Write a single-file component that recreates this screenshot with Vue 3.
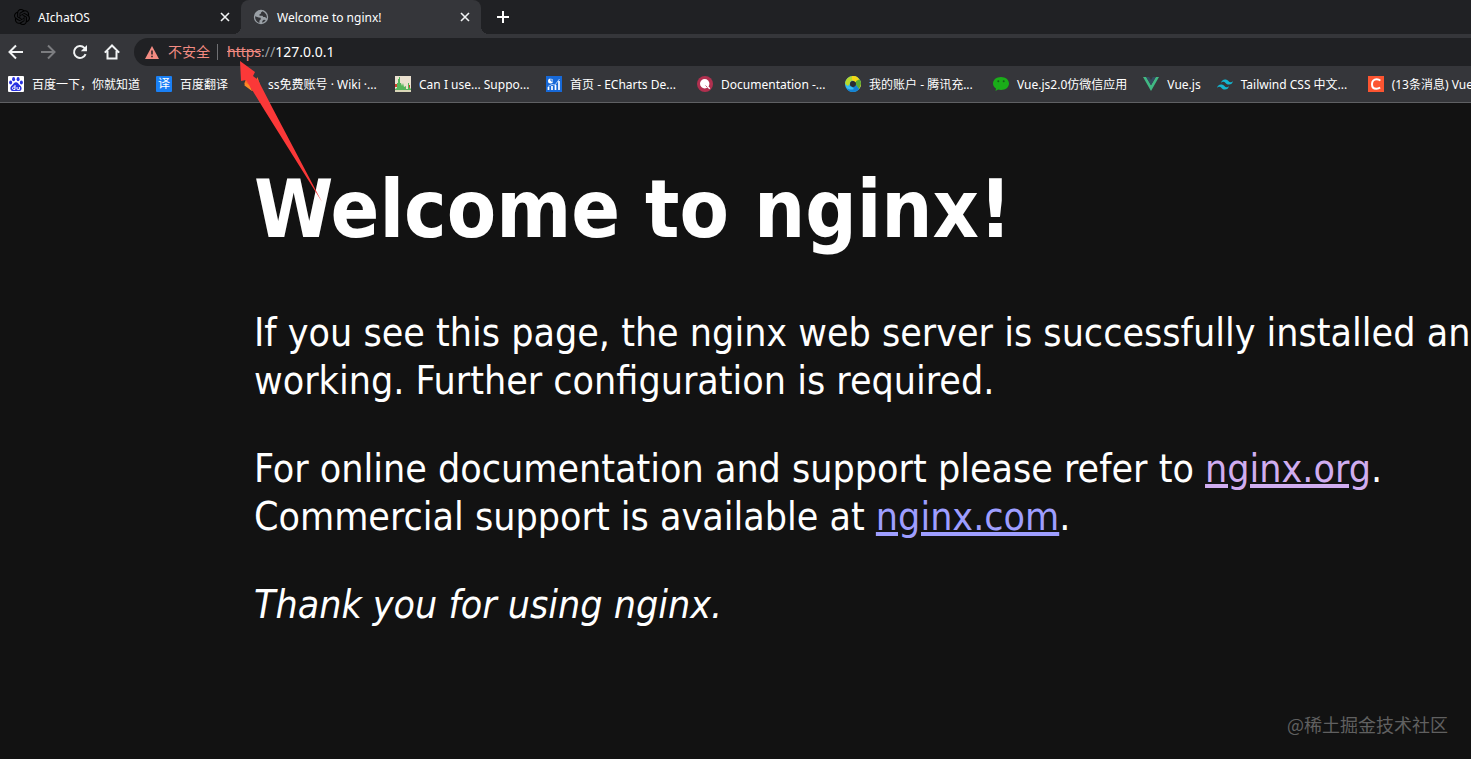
<script setup>
const tabs = [
  { id: 'chat', title: 'AIchatOS', active: false },
  { id: 'nginx', title: 'Welcome to nginx!', active: true },
]

const bookmarks = [
  { icon: 'baidu', label: '百度一下，你就知道' },
  { icon: 'translate', label: '百度翻译' },
  { icon: 'gitlab', label: 'ss免费账号 · Wiki ·...', size: 'wide' },
  { icon: 'caniuse', label: 'Can I use... Suppo...', size: 'wide' },
  { icon: 'echarts', label: '首页 - ECharts De...', size: 'wide' },
  { icon: 'docs', label: 'Documentation -...', size: 'medium' },
  { icon: 'tencent', label: '我的账户 - 腾讯充...', size: 'medium' },
  { icon: 'wechat', label: 'Vue.js2.0仿微信应用' },
  { icon: 'vue', label: 'Vue.js' },
  { icon: 'tailwind', label: 'Tailwind CSS 中文...', size: 'wide' },
  { icon: 'csdn', label: '(13条消息) Vue', size: 'wide' },
]
</script>

<template>
  <div class="browser">
    <header class="chrome">
      <div class="tab-strip">
        <div v-for="tab in tabs" :key="tab.id" class="tab" :class="{ active: tab.active }">
          <svg v-if="tab.id === 'chat'" class="favicon" viewBox="0 0 24 24" aria-hidden="true">
            <path fill="#000" d="M22.2819 9.8211a5.9847 5.9847 0 0 0-.5157-4.9108 6.0462 6.0462 0 0 0-6.5098-2.9A6.0651 6.0651 0 0 0 4.9807 4.1818a5.9847 5.9847 0 0 0-3.9977 2.9 6.0462 6.0462 0 0 0 .7427 7.0966 5.98 5.98 0 0 0 .511 4.9107 6.051 6.051 0 0 0 6.5146 2.9001A5.9847 5.9847 0 0 0 13.2599 24a6.0557 6.0557 0 0 0 5.7718-4.2058 5.9894 5.9894 0 0 0 3.9977-2.9001 6.0557 6.0557 0 0 0-.7475-7.0729zm-9.022 12.6081a4.4755 4.4755 0 0 1-2.8764-1.0408l.1419-.0804 4.7783-2.7582a.7948.7948 0 0 0 .3927-.6813v-6.7369l2.02 1.1686a.071.071 0 0 1 .038.052v5.5826a4.504 4.504 0 0 1-4.4945 4.4944zm-9.6607-4.1254a4.4708 4.4708 0 0 1-.5346-3.0137l.142.0852 4.783 2.7582a.7712.7712 0 0 0 .7806 0l5.8428-3.3685v2.3324a.0804.0804 0 0 1-.0332.0615L9.74 19.9502a4.4992 4.4992 0 0 1-6.1408-1.6464zM2.3408 7.8956a4.485 4.485 0 0 1 2.3655-1.9728V11.6a.7664.7664 0 0 0 .3879.6765l5.8144 3.3543-2.0201 1.1685a.0757.0757 0 0 1-.071 0l-4.8303-2.7865A4.504 4.504 0 0 1 2.3408 7.872zm16.5963 3.8558L13.1038 8.364 15.1192 7.2a.0757.0757 0 0 1 .071 0l4.8303 2.7913a4.4944 4.4944 0 0 1-.6765 8.1042v-5.6772a.79.79 0 0 0-.407-.667zm2.0107-3.0231l-.142-.0852-4.7735-2.7818a.7759.7759 0 0 0-.7854 0L9.409 9.2297V6.8974a.0662.0662 0 0 1 .0284-.0615l4.8303-2.7866a4.4992 4.4992 0 0 1 6.6802 4.66zM8.3065 12.863l-2.02-1.1638a.0804.0804 0 0 1-.038-.0567V6.0742a4.4992 4.4992 0 0 1 7.3757-3.4537l-.142.0805L8.704 5.459a.7948.7948 0 0 0-.3927.6813zm1.0976-2.3654l2.602-1.4998 2.6069 1.4998v2.9994l-2.5974 1.4997-2.6067-1.4997Z" />
          </svg>
          <svg v-else class="favicon" viewBox="0 0 16 16" aria-hidden="true">
            <circle cx="8" cy="8" r="7.2" fill="#9aa0a6" />
            <path fill="#35363a" d="M9.500 2.300 8 3.400v1.200L6.500 5.300v1.400h3l.8 1.200H12l1.800 1.600c.4-2.600-.5-5.400-4.300-7.200zM2.100 7.300l3.600 1.200 2 .2v1.700l-1.300 1.300v2.200C3.700 13 1.800 10.600 2.100 7.300zM9.300 13.800v-1.700l1.500-1.300 1.900.3c-.8 1.400-2 2.300-3.400 2.700z" />
          </svg>
          <span class="tab-title">{{ tab.title }}</span>
          <button class="tab-close" type="button" :aria-label="`Close ${tab.title}`">
            <svg width="10" height="10" viewBox="0 0 10 10"><path d="M1 1l8 8M9 1 1 9" fill="none" stroke="#f1f3f4" stroke-width="1.6" /></svg>
          </button>
        </div>
        <button class="new-tab" type="button" aria-label="New tab">
          <svg width="12" height="12" viewBox="0 0 12 12"><path d="M6 0v12M0 6h12" fill="none" stroke="#fff" stroke-width="2" /></svg>
        </button>
      </div>

      <div class="toolbar">
        <button class="nav" type="button" aria-label="Back">
          <svg viewBox="0 0 16 16"><path d="M15 8H2M8 1.500 1.500 8 8 14.500" fill="none" stroke="#f1f3f4" stroke-width="2" /></svg>
        </button>
        <button class="nav" type="button" aria-label="Forward" disabled>
          <svg viewBox="0 0 16 16"><path d="M1 8h13M8 1.500 14.500 8 8 14.500" fill="none" stroke="#7c7d80" stroke-width="2" /></svg>
        </button>
        <button class="nav" type="button" aria-label="Reload">
          <svg viewBox="0 0 16 16"><path d="M13.600 10.200A6 6 0 1 1 12.400 3.900L13.800 5.300" fill="none" stroke="#f1f3f4" stroke-width="2" /><path d="M15 1v6.200H8.800z" fill="#f1f3f4" /></svg>
        </button>
        <button class="nav" type="button" aria-label="Home">
          <svg viewBox="0 0 16 16"><path d="M.8 8.600 8 1.500l7.200 7.100M3.500 7v7.500h9V7" fill="none" stroke="#f1f3f4" stroke-width="2" /></svg>
        </button>
        <div class="omnibox">
          <svg class="warning" viewBox="0 0 14 13" aria-hidden="true">
            <path d="M7 0l7 13H0z" fill="#f28b82" />
            <path d="M7 4.500v4M7 9.700v1.600" stroke="#202124" stroke-width="1.5" />
          </svg>
          <span class="insecure">不安全</span>
          <span class="divider"></span>
          <span class="url"><s class="scheme">https</s><span class="slashes">://</span>127.0.0.1</span>
        </div>
      </div>

      <nav class="bookmarks" aria-label="Bookmarks">
        <a v-for="mark in bookmarks" :key="mark.icon" href="#" class="bookmark" :class="mark.size">
          <svg v-if="mark.icon === 'baidu'" viewBox="0 0 16 16">
            <rect width="16" height="16" rx="1" fill="#fff" />
            <g fill="#2932e1">
              <ellipse cx="5.6" cy="3.2" rx="1.5" ry="2.1" />
              <ellipse cx="10.1" cy="3.2" rx="1.5" ry="2.1" />
              <ellipse cx="2.6" cy="6.6" rx="1.5" ry="2" />
              <ellipse cx="13.4" cy="6.6" rx="1.5" ry="2" />
              <path d="M8 6.200c1.800 0 2.500 1.900 3.900 3.100 1.700 1.500 2.100 3 1.400 4.400-1 2-3.300 1.200-5.300 1.200s-4.300.8-5.300-1.200c-.7-1.400-.3-2.900 1.400-4.400C5.500 8.100 6.200 6.200 8 6.200z" />
            </g>
            <path d="M7 9v4.500H5.500c-1.300 0-1.300-2.500 0-2.500H7M9 11v2c0 .4.3.6.700.6h1.700V11" fill="none" stroke="#fff" />
          </svg>
          <svg v-else-if="mark.icon === 'translate'" viewBox="0 0 16 16">
            <rect width="16" height="16" rx="1" fill="#1a80f5" />
            <text x="8" y="12" text-anchor="middle" class="glyph-cjk">译</text>
          </svg>
          <svg v-else-if="mark.icon === 'gitlab'" viewBox="0 0 16 16">
            <path d="M2.500 1 .5 7.500 8 15 5.300 7z" fill="#fc6d26" />
            <path d="m13.500 1 2 6.500L8 15l2.700-8z" fill="#fc6d26" />
            <path d="M5.300 7h5.400L8 15z" fill="#e24329" />
            <path d="M.8 6.500 5.300 9 8 15 .5 9.500zM15.200 6.500 10.700 9 8 15l7.500-5.500z" fill="#fc8a26" />
          </svg>
          <svg v-else-if="mark.icon === 'caniuse'" viewBox="0 0 16 16">
            <rect width="16" height="16" fill="#ebe1d0" />
            <path d="M0 8h2v3H0zM8 11h3v2H8zM13 9h2v3h-2z" fill="#d4402f" />
            <path d="M0 13l2-1V7h1V3h1V1h1v6h1l1 3 1-3 1 4 2-1v3h2V7h1v4l2 2v1H0z" fill="#55b55b" />
            <path d="M0 14h16v2H0z" fill="#d9d7b8" />
          </svg>
          <svg v-else-if="mark.icon === 'echarts'" viewBox="0 0 16 16">
            <rect width="16" height="16" fill="#1769d8" />
            <circle cx="4.5" cy="5" r="2.5" fill="#fff" />
            <path d="M5 2v3h3" fill="none" stroke="#1769d8" />
            <path d="M2.500 14v-3M6 14v-4M9.500 14V9M13 14V5" stroke="#fff" stroke-width="1.7" />
            <path d="M2 10.500l4-2 3 .5 4.500-6" fill="none" stroke="#d5e6ff" stroke-width=".8" />
          </svg>
          <svg v-else-if="mark.icon === 'docs'" viewBox="0 0 16 16">
            <circle cx="8" cy="8" r="8" fill="#b0304f" />
            <circle cx="7.7" cy="7.7" r="4.7" fill="#fff" />
            <path d="m8.500 9.500 3 3" stroke="#b0304f" stroke-width=".8" />
            <path d="m10.500 10.500 2.300 2.300" stroke="#fff" stroke-width="1.5" />
          </svg>
          <svg v-else-if="mark.icon === 'tencent'" viewBox="0 0 16 16">
            <circle cx="8" cy="8" r="5.5" fill="none" stroke="#2fb5ed" stroke-width="5" />
            <path d="M0 7a8 8 0 0 1 8-7c2 0 4 .8 5.300 2L10 5.200C7 3.500 5 5 4.800 8L3 10C1.500 9.500.3 8.500 0 7z" fill="#b8d92b" />
            <path d="M7 0c5-.5 9 3.500 9 8 0 2-1 4-2 5-.2-3-1-5-3.300-6.800L7 4z" fill="#f5d715" />
            <path d="M11 5 14.500 3.200C15.500 4.700 16 6 16 8l-2 5-3.200-4z" fill="#5cab32" />
            <path d="M2 13.200 5 10c2 2 4.800 1.500 6-1l3 4c-3.500 4-9 3.800-12 .2z" fill="#1482d4" />
            <path d="M0 7c1 3 4 4 6.500 3.500L9 13c-4 1.500-8 0-9-6z" fill="#35bdf2" />
            <circle cx="8" cy="8" r="2.8" fill="#292d32" />
          </svg>
          <svg v-else-if="mark.icon === 'wechat'" viewBox="0 0 16 16">
            <path d="M8 1c4.500 0 8 2.800 8 6.500S12.500 14 8 14c-1 0-2-.1-2.900-.4L2.500 15l.5-2.500C1.100 11.300 0 9.500 0 7.500 0 3.800 3.500 1 8 1z" fill="#1aad19" />
            <circle cx="5.3" cy="5.3" r="1" fill="#145f17" />
            <circle cx="10.7" cy="5.3" r="1" fill="#145f17" />
          </svg>
          <svg v-else-if="mark.icon === 'vue'" viewBox="0 0 16 16">
            <path d="M0 1h3.200L8 9.300 12.800 1H16L8 15z" fill="#41b883" />
            <path d="M3.200 1h3L8 4.100 9.800 1h3L8 9.300z" fill="#35495e" />
          </svg>
          <svg v-else-if="mark.icon === 'tailwind'" viewBox="0 0 16 16">
            <path d="M4 7c.5-2.400 1.900-3.600 4-3.600 3.200 0 3.600 2.400 5.200 2.800 1 .3 2-.1 2.800-1.200-.5 2.400-1.900 3.600-4 3.600-3.200 0-3.600-2.400-5.200-2.800C5.700 5.500 4.800 5.900 4 7zM0 12c.5-2.400 1.900-3.600 4-3.600 3.200 0 3.600 2.400 5.200 2.800 1 .3 2-.1 2.800-1.200-.5 2.400-1.900 3.600-4 3.600-3.200 0-3.600-2.400-5.200-2.800C1.700 10.500.8 10.900 0 12z" fill="#13b5d0" />
          </svg>
          <svg v-else viewBox="0 0 16 16">
            <rect width="16" height="16" fill="#fc5531" />
            <path d="M12.300 4.700C11.400 3.700 10.200 3.300 8.600 3.300 5.800 3.300 4 5.400 4 8.200c0 2.700 1.600 4.500 4.300 4.500 1.500 0 2.800-.4 3.800-1.200" fill="none" stroke="#fff" stroke-width="2" />
          </svg>
          <span>{{ mark.label }}</span>
        </a>
      </nav>
    </header>

    <main class="page">
      <article class="content">
        <h1>Welcome to nginx!</h1>
        <p>If you see this page, the nginx web server is successfully installed and<br />working. Further configuration is required.</p>
        <p>For online documentation and support please refer to <a class="visited" href="#">nginx.org</a>.<br />Commercial support is available at <a href="#">nginx.com</a>.</p>
        <p><em>Thank you for using nginx.</em></p>
      </article>
      <div class="watermark">@稀土掘金技术社区</div>
    </main>

    <svg class="pointer" width="84" height="142" viewBox="0 0 84 142" aria-hidden="true">
      <path d="M0 0 15 11 13 15 18 19 33 48 82 141 25 50 6 19 1 20z" fill="#fb3838" />
    </svg>
  </div>
</template>

<style>
body {
  margin: 0;
  background: #121212;
}
</style>

<style scoped>
.browser {
  position: relative;
  display: flex;
  flex-direction: column;
  min-height: 100vh;
  overflow: hidden;
  background: #121212;
  color: #fff;
  font-family: "Noto Sans", "Noto Sans CJK SC", sans-serif;
}

button {
  display: flex;
  align-items: center;
  justify-content: center;
  padding: 0;
  border: 0;
  background: none;
}

.chrome {
  background: #35363a;
  border-bottom: 1px solid #5f6063;
  font-size: 12px;
  line-height: 17px;
}

.tab-strip {
  display: flex;
  height: 34px;
  padding-left: 1px;
  background: #202124;
}

.tab {
  display: flex;
  align-items: center;
  gap: 8px;
  box-sizing: border-box;
  width: 240px;
  padding: 0 8px 0 13px;
}

.tab.active {
  position: relative;
  padding-left: 12px;
  background: #35363a;
  border-radius: 8px 8px 0 0;
}

.tab.active::before,
.tab.active::after {
  content: "";
  position: absolute;
  bottom: 0;
  width: 8px;
  height: 8px;
}

.tab.active::before {
  right: 100%;
  background: radial-gradient(circle at 0 0, transparent 8px, #35363a 8px);
}

.tab.active::after {
  left: 100%;
  background: radial-gradient(circle at 100% 0, transparent 8px, #35363a 8px);
}

.favicon {
  flex: none;
  width: 16px;
  height: 16px;
}

.tab-title {
  flex: 1;
  white-space: nowrap;
}

.tab-close {
  width: 16px;
  height: 16px;
}

.new-tab {
  width: 28px;
  margin-left: 8px;
}

.toolbar {
  display: flex;
  align-items: center;
  height: 36px;
  padding-left: 8px;
}

.nav {
  width: 16px;
  height: 16px;
  margin-right: 16px;
}

.nav svg {
  width: 16px;
  height: 16px;
}

.omnibox {
  display: flex;
  flex: 1;
  align-items: center;
  height: 28px;
  margin-left: -2px;
  padding-left: 11px;
  background: #202124;
  border-radius: 14px 0 0 14px;
  font-size: 14px;
  line-height: 16px;
  white-space: nowrap;
}

.warning {
  width: 14px;
  height: 13px;
}

.insecure {
  margin-left: 9px;
  color: #f28b82;
}

.divider {
  width: 1px;
  height: 16px;
  margin: 0 9px 0 7px;
  background: #6f7073;
}

.scheme {
  color: #f28b82;
}

.slashes {
  color: #9aa0a6;
}

.bookmarks {
  display: flex;
  align-items: center;
  height: 28px;
  padding: 0 0 4px 8px;
  overflow: hidden;
}

.bookmark {
  display: flex;
  flex: none;
  align-items: center;
  gap: 8px;
  box-sizing: border-box;
  padding-right: 16px;
  color: #fff;
  text-decoration: none;
  white-space: nowrap;
}

.bookmark.wide {
  width: 151px;
}

.bookmark.medium {
  width: 148px;
}

.bookmark svg {
  flex: none;
  width: 16px;
  height: 16px;
}

.glyph-cjk {
  fill: #fff;
  font-size: 12px;
}

.page {
  position: relative;
  flex: 1;
  padding: 59px 0 0 254px;
  font-family: "DejaVu Sans Condensed", "DejaVu Sans", sans-serif;
}

.content {
  font-size: 39px;
  line-height: 48px;
  white-space: nowrap;
}

h1 {
  margin: 0 0 51px;
  font-size: 80px;
  line-height: 96px;
}

p {
  margin: 0 0 40px;
}

p a {
  color: #9e9eff;
  text-decoration-thickness: 4px;
  text-underline-offset: 2px;
}

p a.visited {
  color: #d0adf0;
}

.watermark {
  position: absolute;
  right: 23px;
  bottom: 22px;
  color: #606060;
  font-family: "Noto Sans CJK SC", sans-serif;
  font-size: 18px;
  line-height: 26px;
}

.pointer {
  position: absolute;
  top: 61px;
  left: 240px;
}
</style>
